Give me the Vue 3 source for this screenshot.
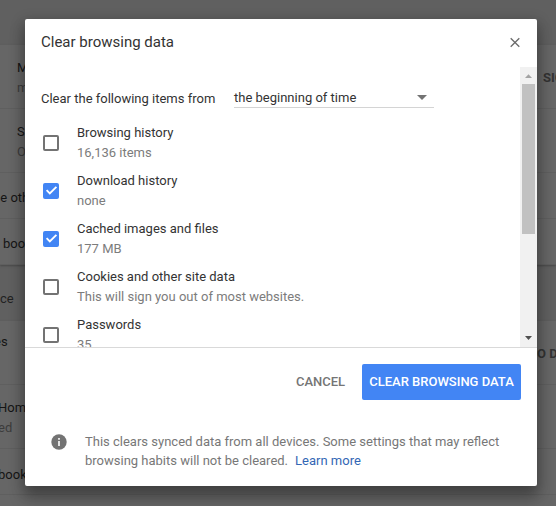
<template>
  <div class="page">
    <div class="settings">
      <div v-for="(section, i) in sections" :key="i" class="section">
        <div class="section-title" :class="{ first: i === 0 }">{{ section.title }}</div>
        <div class="card">
          <div v-for="row in section.rows" :key="row.text" class="settings-row" :class="row.size">
            <div class="row-text" :class="row.align">
              <div>{{ row.text }}</div>
              <div v-if="row.sub" class="row-sub">{{ row.sub }}</div>
            </div>
            <div v-if="row.action" class="row-action" :class="row.align">{{ row.action }}</div>
          </div>
        </div>
      </div>
    </div>

    <div class="dialog">
      <div class="dialog-header">
        <h1>Clear browsing data</h1>
        <button class="close-button" aria-label="Close">
          <svg width="12" height="12" viewBox="0 0 12 12">
            <path d="M1.7 1.2 10.3 9.8M10.3 1.2 1.7 9.8" fill="none" stroke="#6c6c6c" stroke-width="1.35" />
          </svg>
        </button>
      </div>

      <div class="dialog-body">
        <div class="options">
          <div class="period">
            <span class="period-label">Clear the following items from</span>
            <div class="select">
              <span>the beginning of time</span>
              <svg width="10" height="5" viewBox="0 0 10 5">
                <path d="M0 0h10L5 5z" fill="#737373" />
              </svg>
            </div>
          </div>
          <div v-for="item in items" :key="item.label" class="option" @click="item.checked = !item.checked">
            <span class="checkbox" :class="{ checked: item.checked }">
              <svg v-if="item.checked" width="16" height="16" viewBox="0 0 16 16">
                <path d="M3.6 7.2 6.8 10.4 13.4 3.8" fill="none" stroke="#fff" stroke-width="1.9" />
              </svg>
            </span>
            <div class="option-text">
              <div class="option-label">{{ item.label }}</div>
              <div class="option-sub">{{ item.sub }}</div>
            </div>
          </div>
        </div>
        <div class="scrollbar">
          <svg class="arrow" width="17" height="17" viewBox="0 0 17 17">
            <path d="M5 11 8.5 7.2 12 11z" fill="#a3a3a3" />
          </svg>
          <div class="thumb"></div>
          <svg class="arrow" width="17" height="17" viewBox="0 0 17 17">
            <path d="M5 6 8.5 10 12 6z" fill="#505050" />
          </svg>
        </div>
      </div>

      <div class="dialog-actions">
        <button class="cancel-button">CANCEL</button>
        <button class="clear-button">CLEAR BROWSING DATA</button>
      </div>

      <div class="dialog-info">
        <svg width="16" height="16" viewBox="0 0 16 16">
          <circle cx="8" cy="8" r="7.7" fill="#737373" />
          <path d="M7.2 7h1.6v5H7.2zM7.2 4h1.6v1.7H7.2z" fill="#fff" />
        </svg>
        <p>
          This clears synced data from all devices. Some settings that may reflect<br>
          browsing habits will not be cleared.<a href="#">Learn more</a>
        </p>
      </div>
    </div>
  </div>
</template>

<script setup>
import { reactive } from 'vue'

const items = reactive([
  { label: 'Browsing history', sub: '16,136 items', checked: false },
  { label: 'Download history', sub: 'none', checked: true },
  { label: 'Cached images and files', sub: '177 MB', checked: true },
  { label: 'Cookies and other site data', sub: 'This will sign you out of most websites.', checked: false },
  { label: 'Passwords', sub: '35', checked: false }
])

const sections = [
  {
    title: '',
    rows: [
      { text: 'M', sub: 'm', action: 'SIG', size: 'tall', align: 'inset' },
      { text: 'S', sub: 'O', size: 'tall', align: 'inset' },
      { text: 'ge oth', size: 'short', align: 'cut' },
      { text: 'boo', size: 'short', align: 'nudge' }
    ]
  },
  {
    title: 'ce',
    rows: [
      { text: 'es', action: 'O D', size: 'tall', align: 'top' },
      { text: 'Hom', sub: 'ed', size: 'tall' },
      { text: 'book', size: 'short low' },
      { text: '', size: 'short' }
    ]
  }
]
</script>

<style>
body {
  margin: 0;
}
</style>

<style scoped>
.page {
  position: relative;
  width: 556px;
  height: 506px;
  overflow: hidden;
  background: #606060;
  font-family: Roboto, "Liberation Sans", sans-serif;
  font-size: 13px;
  color: #333;
}

.section-title {
  box-sizing: border-box;
  height: 56px;
  padding-top: 24px;
  line-height: 20px;
  color: #222;
}

.section-title.first {
  height: 45px;
}

.card {
  background: #666;
  box-shadow: 0 1px 2px #484848;
}

.settings-row {
  display: flex;
  align-items: center;
  justify-content: space-between;
  box-sizing: border-box;
  height: 46px;
  padding-top: 4px;
  border-bottom: 1px solid #5f5f5f;
  line-height: 20px;
  color: #151515;
}

.settings-row.tall {
  height: 64px;
  padding-top: 2px;
}

.settings-row.low {
  padding-top: 6px;
}

.row-text {
  margin-left: -2px;
}

.row-text.inset {
  margin-left: 17px;
}

.row-text.nudge {
  margin-left: 3px;
}

.row-text.cut {
  margin-left: -7px;
}

.row-text.top {
  align-self: flex-start;
  margin: 9px 0 0 -6px;
}

.row-sub {
  color: #3c3c3c;
}

.row-action {
  width: 19px;
  overflow: hidden;
  white-space: nowrap;
  font-weight: 700;
  color: #333;
}

.row-action.inset {
  width: 13px;
}

.dialog {
  position: absolute;
  top: 19px;
  left: 25px;
  width: 512px;
  height: 467px;
  border-radius: 2px;
  background: #fff;
  box-shadow: 0 12px 16px 1px rgba(0, 0, 0, 0.24), 0 4px 14px 2px rgba(0, 0, 0, 0.2);
}

.dialog-header {
  display: flex;
  align-items: center;
  justify-content: space-between;
  height: 48px;
  padding: 0 16px;
  box-sizing: border-box;
}

h1 {
  margin: 0;
  padding-bottom: 2px;
  font-size: 15px;
  font-weight: 400;
  line-height: 20px;
}

button {
  padding: 0;
  border: none;
  background: none;
  font: inherit;
  cursor: pointer;
}

.close-button {
  display: flex;
}

.dialog-body {
  display: flex;
  height: 280px;
  border-bottom: 1px solid #d9d9d9;
}

.options {
  flex: 1;
  overflow: hidden;
  padding-left: 16px;
}

.period {
  display: flex;
  height: 52px;
}

.period-label {
  width: 193px;
  padding-top: 22px;
  line-height: 20px;
}

.select {
  display: flex;
  align-items: center;
  justify-content: space-between;
  box-sizing: border-box;
  width: 200px;
  height: 21px;
  margin-top: 20px;
  padding-right: 7px;
  border-bottom: 1px solid #d4d4d4;
}

.option {
  display: flex;
  align-items: center;
  height: 48px;
  cursor: pointer;
}

.checkbox {
  box-sizing: border-box;
  width: 16px;
  height: 16px;
  margin: 0 18px 0 2px;
  border: 2px solid #737373;
  border-radius: 2px;
}

.checkbox.checked {
  display: flex;
  border: none;
  background: #4285f4;
}

.option-text {
  line-height: 20px;
  padding-bottom: 1px;
}

.option-sub {
  color: #7c7c7c;
}

.scrollbar {
  display: flex;
  flex-direction: column;
  width: 17px;
  background: #f1f1f1;
}

.arrow {
  display: block;
}

.thumb {
  height: 150px;
  margin: 0 2px 96px;
  background: #c1c1c1;
}

.dialog-actions {
  display: flex;
  justify-content: flex-end;
  padding: 16px 16px 0 0;
}

.cancel-button,
.clear-button {
  height: 36px;
  border-radius: 2px;
  font-weight: 500;
  white-space: nowrap;
}

.cancel-button {
  width: 65px;
  margin-right: 9px;
  padding-bottom: 2px;
  color: #757575;
}

.clear-button {
  width: 159px;
  padding-bottom: 2px;
  background: #4285f4;
  color: #fff;
}

.dialog-info {
  display: flex;
  padding: 32px 0 0 26px;
  color: #777;
}

.dialog-info svg {
  margin-top: 2px;
}

.dialog-info p {
  margin: 0 0 0 18px;
  line-height: 19px;
  white-space: nowrap;
}

.dialog-info a {
  margin-left: 7px;
  color: #3367b5;
  text-decoration: none;
}
</style>
